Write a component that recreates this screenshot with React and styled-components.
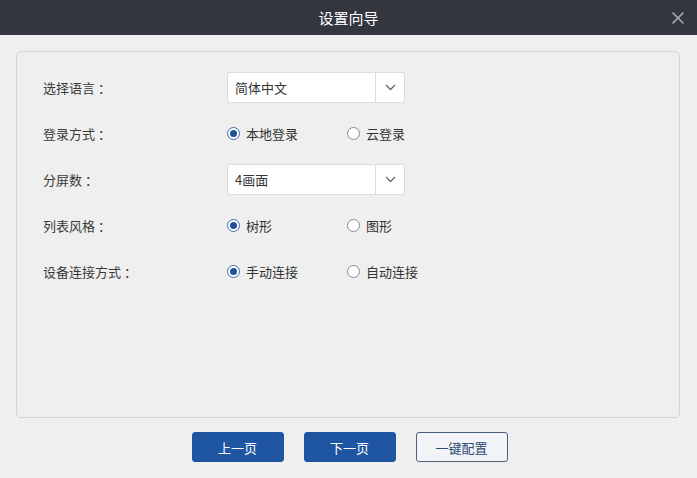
import React, { useState } from 'react';
import styled, { createGlobalStyle } from 'styled-components';

const GlobalStyle = createGlobalStyle`
    html, body {
        margin: 0;
        padding: 0;
        background: #efefef;
    }
    body {
        font-family: "Noto Sans CJK SC", "Liberation Sans", sans-serif;
        color: #333;
    }
`;

const Dialog = styled.div`
    width: 697px;
    height: 478px;
    display: flex;
    flex-direction: column;
    background: #efefef;
`;

const TitleBar = styled.div`
    height: 35px;
    flex: none;
    display: flex;
    align-items: center;
    justify-content: center;
    position: relative;
    background: #33363f;
    color: #fff;
    font-size: 15px;
`;

const CloseButton = styled.button`
    position: absolute;
    right: 11px;
    top: 9px;
    width: 17px;
    height: 17px;
    padding: 0;
    border: none;
    background: none;
    cursor: pointer;
    display: flex;
    align-items: center;
    justify-content: center;
`;

const Body = styled.div`
    flex: 1;
    display: flex;
    flex-direction: column;
    padding: 16px 17px 0 16px;
`;

const Panel = styled.div`
    height: 367px;
    box-sizing: border-box;
    border: 1px solid #d3d3d3;
    border-radius: 5px;
    padding: 20px 26px;
    display: flex;
    flex-direction: column;
    gap: 16px;
`;

const Row = styled.div`
    display: flex;
    align-items: center;
    height: 30px;
`;

const Label = styled.div`
    width: 184px;
    font-size: 13px;
    color: #3a3a3a;
`;

const Colon = styled.span`
    margin-left: 3px;
`;

const Select = styled.div`
    width: 178px;
    height: 31px;
    box-sizing: border-box;
    display: flex;
    background: #fff;
    border: 1px solid #dcdcdc;
    border-radius: 3px;
`;

const SelectValue = styled.div`
    flex: 1;
    display: flex;
    align-items: center;
    padding-left: 7px;
    font-size: 13px;
    color: #333;
`;

const SelectArrow = styled.div`
    width: 28px;
    border-left: 1px solid #dcdcdc;
    display: flex;
    align-items: center;
    justify-content: center;
`;

const RadioGroup = styled.div`
    display: flex;
    align-items: center;
`;

const RadioOption = styled.label`
    width: ${p => (p.$last ? 'auto' : '120px')};
    display: flex;
    align-items: center;
    gap: 6px;
    font-size: 13px;
    color: #333;
    cursor: pointer;
`;

const RadioDot = styled.span`
    width: 11px;
    height: 11px;
    border-radius: 50%;
    border: 1px solid ${p => (p.$checked ? '#3d6bb0' : '#8a8a8a')};
    background: #fff;
    display: flex;
    align-items: center;
    justify-content: center;
    &::after {
        content: '';
        width: 7px;
        height: 7px;
        border-radius: 50%;
        background: ${p => (p.$checked ? '#23509a' : 'transparent')};
    }
`;

const Footer = styled.div`
    display: flex;
    justify-content: center;
    gap: 20px;
    padding: 14px 0 0 3px;
`;

const Button = styled.button`
    width: 92px;
    height: 30px;
    border-radius: 3px;
    font-family: inherit;
    font-size: 13px;
    cursor: pointer;
    background: ${p => (p.$primary ? '#1f56a1' : '#f2f4f7')};
    color: ${p => (p.$primary ? '#fff' : '#2b4a73')};
    border: 1px solid ${p => (p.$primary ? '#1f56a1' : '#4a5f7d')};
`;

const Chevron = () => (
    <svg width="11" height="7" viewBox="0 0 11 7">
        <path d="M1 1l4.5 4.5L10 1" fill="none" stroke="#666" strokeWidth="1.3" />
    </svg>
);

const SelectField = ({ value }) => (
    <Select>
        <SelectValue>{value}</SelectValue>
        <SelectArrow><Chevron /></SelectArrow>
    </Select>
);

const Radios = ({ options, value, onChange }) => (
    <RadioGroup>
        {options.map((opt, i) => (
            <RadioOption key={opt} $last={i === options.length - 1} onClick={() => onChange(opt)}>
                <RadioDot $checked={value === opt} />
                {opt}
            </RadioOption>
        ))}
    </RadioGroup>
);

const FieldLabel = ({ children }) => (
    <Label>{children}<Colon>：</Colon></Label>
);

export default function App() {
    const [login, setLogin] = useState('本地登录');
    const [style, setStyle] = useState('树形');
    const [connect, setConnect] = useState('手动连接');

    return (
        <>
            <GlobalStyle />
            <Dialog>
                <TitleBar>
                    设置向导
                    <CloseButton aria-label="close">
                        <svg width="14" height="14" viewBox="0 0 14 14">
                            <path d="M1.5 1.5l11 11M12.5 1.5l-11 11" stroke="#a9abb0" strokeWidth="1.6" />
                        </svg>
                    </CloseButton>
                </TitleBar>
                <Body>
                    <Panel>
                        <Row>
                            <FieldLabel>选择语言</FieldLabel>
                            <SelectField value="简体中文" />
                        </Row>
                        <Row>
                            <FieldLabel>登录方式</FieldLabel>
                            <Radios options={['本地登录', '云登录']} value={login} onChange={setLogin} />
                        </Row>
                        <Row>
                            <FieldLabel>分屏数</FieldLabel>
                            <SelectField value="4画面" />
                        </Row>
                        <Row>
                            <FieldLabel>列表风格</FieldLabel>
                            <Radios options={['树形', '图形']} value={style} onChange={setStyle} />
                        </Row>
                        <Row>
                            <FieldLabel>设备连接方式</FieldLabel>
                            <Radios options={['手动连接', '自动连接']} value={connect} onChange={setConnect} />
                        </Row>
                    </Panel>
                    <Footer>
                        <Button $primary>上一页</Button>
                        <Button $primary>下一页</Button>
                        <Button>一键配置</Button>
                    </Footer>
                </Body>
            </Dialog>
        </>
    );
}
